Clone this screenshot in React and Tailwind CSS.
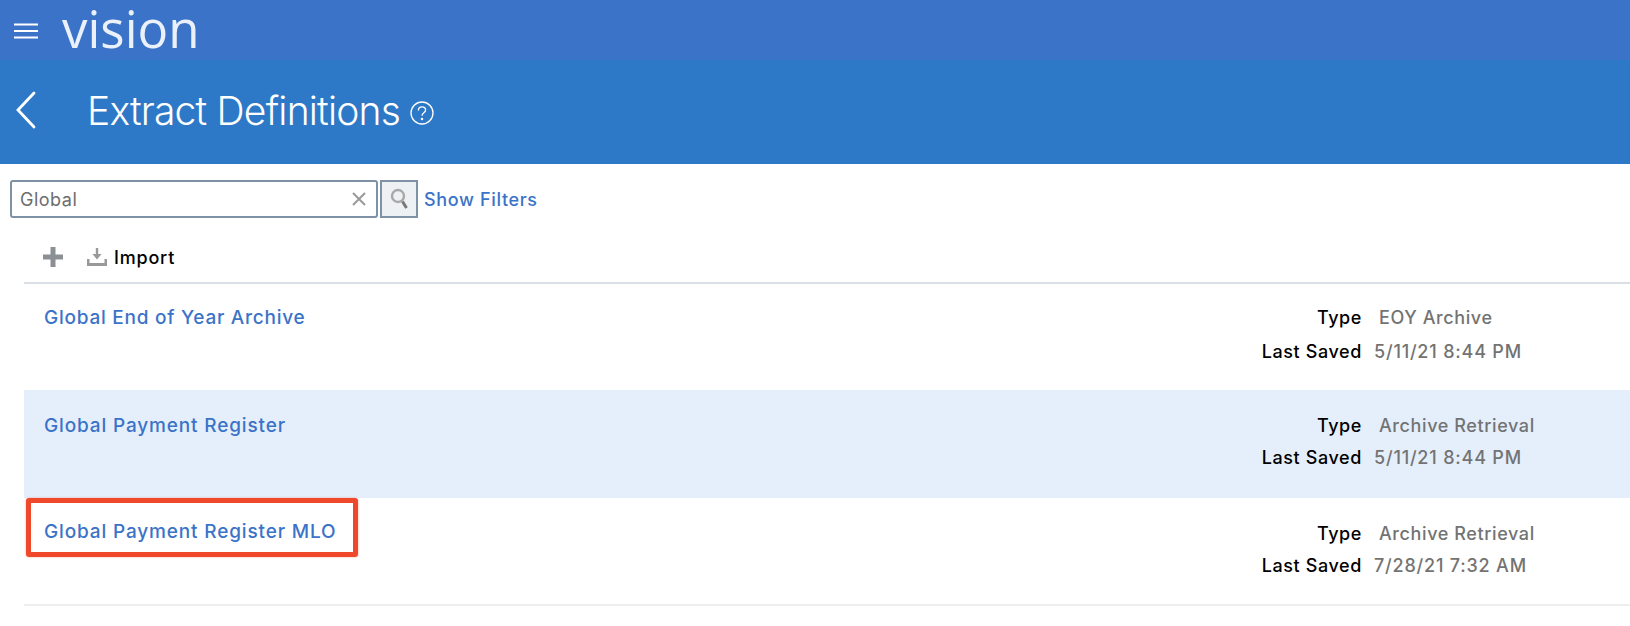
const ROWS = [
  { name: 'Global End of Year Archive', type: 'EOY Archive', saved: '5/11/21 8:44 PM', h: 'h-[106px]', top: 'pt-[24px]', gap: 'mt-[14px]', linkTop: 'mt-[23px]', track: 'tracking-[0.75px]' },
  { name: 'Global Payment Register', type: 'Archive Retrieval', saved: '5/11/21 8:44 PM', h: 'h-[108px] bg-[#e5effb]', top: 'pt-[26px]', gap: 'mt-[12px]', linkTop: 'mt-[25px]', track: 'tracking-[0.85px]' },
  { name: 'Global Payment Register MLO', type: 'Archive Retrieval', saved: '7/28/21 7:32 AM', h: 'h-[106px]', top: 'pt-[26px]', gap: 'mt-[12px]', linkTop: 'mt-[23px]', track: 'tracking-[0.85px]', marked: true },
]

export default function App() {
  return (
    <div className="h-[626px] overflow-hidden bg-white font-['Inter',sans-serif]">
      {/* Top bar */}
      <div className="flex h-[60px] items-start bg-[#3b73c8]">
        <svg width="24" height="16" viewBox="0 0 24 16" className="ml-[14px] mt-[23px]" stroke="#fff" strokeWidth="2" fill="none">
          <path d="M0 1.5h24M0 8h24M0 14.5h24" />
        </svg>
        <span className="ml-[24px] h-[60px] text-[51px] leading-[56px] text-white/90 font-['Open_Sans',sans-serif]">vision</span>
      </div>

      {/* Page title */}
      <div className="flex h-[104px] items-center bg-[#2e79c7]">
        <svg width="22" height="38" viewBox="0 0 22 38" className="ml-[15px] mt-[-4px]" stroke="#fff" strokeWidth="2.8" fill="none" strokeLinecap="round">
          <path d="M19 2 3 19l16 17" />
        </svg>
        <h1 className="ml-[50px] mt-[-3px] text-[39px] leading-none font-light tracking-[-0.8px] text-white">Extract Definitions</h1>
        <svg width="24" height="24" viewBox="0 0 24 24" className="ml-[10px] mt-[2px]" stroke="#fff" strokeWidth="1.3" fill="none">
          <circle cx="12" cy="12" r="11" />
          <path d="M8.4 9.4c0-2.2 1.6-3.6 3.6-3.6s3.6 1.3 3.6 3.2c0 2.8-3.6 2.8-3.6 5.8" />
          <circle cx="12" cy="18" r="0.6" />
        </svg>
      </div>

      {/* Search */}
      <div className="ml-[10px] mt-[16px] flex items-center tracking-[0.5px]">
        <div className="flex h-[38px] w-[368px] items-center justify-between rounded-[3px] border-[2px] border-[#7f92a5] pl-[8px] pr-[10px] text-[18px] text-[#6d6d6d]">
          <span>Global</span>
          <svg width="14" height="14" viewBox="0 0 14 14" stroke="#9a9a9a" strokeWidth="2" fill="none">
            <path d="m1 1 12 12M13 1 1 13" />
          </svg>
        </div>
        <div className="ml-[2px] flex h-[38px] w-[38px] items-center justify-center border-[2px] border-[#7f92a5] bg-[#eef1f3]">
          <svg width="20" height="22" viewBox="0 0 20 22" fill="none">
            <circle cx="9" cy="8" r="6" stroke="#a8a8a8" strokeWidth="2.4" />
            <path d="m13.5 13.5 4 6.5" stroke="#777" strokeWidth="3" />
          </svg>
        </div>
        <a className="ml-[6px] text-[18px] font-medium tracking-[0.65px] text-[#3b73c8]">Show Filters</a>
      </div>

      {/* Toolbar */}
      <div className="ml-[24px] mt-[22px] flex h-[44px] items-center border-b-2 border-[#d9dfe5] pb-[8px]">
        <svg width="20" height="20" viewBox="0 0 20 20" fill="#8b9095" className="ml-[19px]">
          <path d="M7.5 0h5v7.5H20v5h-7.5V20h-5v-7.5H0v-5h7.5z" />
        </svg>
        <svg width="20" height="18" viewBox="0 0 20 18" fill="none" className="ml-[24px]">
          <path d="M10 0v8" stroke="#999" strokeWidth="2.4" />
          <path d="M5.5 6h9L10 11.5z" fill="#999" />
          <path d="M0 11h2.5v4h15v-4H20v7H0z" fill="#999" />
        </svg>
        <span className="ml-[7px] text-[18px] font-medium tracking-[0.8px] text-black">Import</span>
      </div>

      {/* Rows */}
      <div className="ml-[24px] border-b-2 border-[#eceef0]">
        {ROWS.map(r => (
          <div key={r.name} className={`relative flex justify-between ${r.h}`}>
            <a className={`ml-[20px] text-[19px] leading-[22px] font-medium text-[#3b73c8] ${r.track} ${r.linkTop}`}>{r.name}</a>
            {r.marked && (
              <div className="absolute left-[2px] top-0 h-[59px] w-[332px] rounded-[3px] border-[5px] border-[#f0482a] shadow-[0_0_2px_#f0482a80]" />
            )}
            <div className={`mr-[38px] w-[336px] text-[18px] leading-[20px] font-medium tracking-[0.6px] ${r.top}`}>
              <div className="flex">
                <span className="w-[106px] text-right text-black">Type</span>
                <span className="ml-[17px] text-[#737373]">{r.type}</span>
              </div>
              <div className={`flex ${r.gap}`}>
                <span className="w-[106px] text-right text-black">Last Saved</span>
                <span className="ml-[12px] tracking-[0.8px] text-[#737373]">{r.saved}</span>
              </div>
            </div>
          </div>
        ))}
      </div>
    </div>
  )
}
